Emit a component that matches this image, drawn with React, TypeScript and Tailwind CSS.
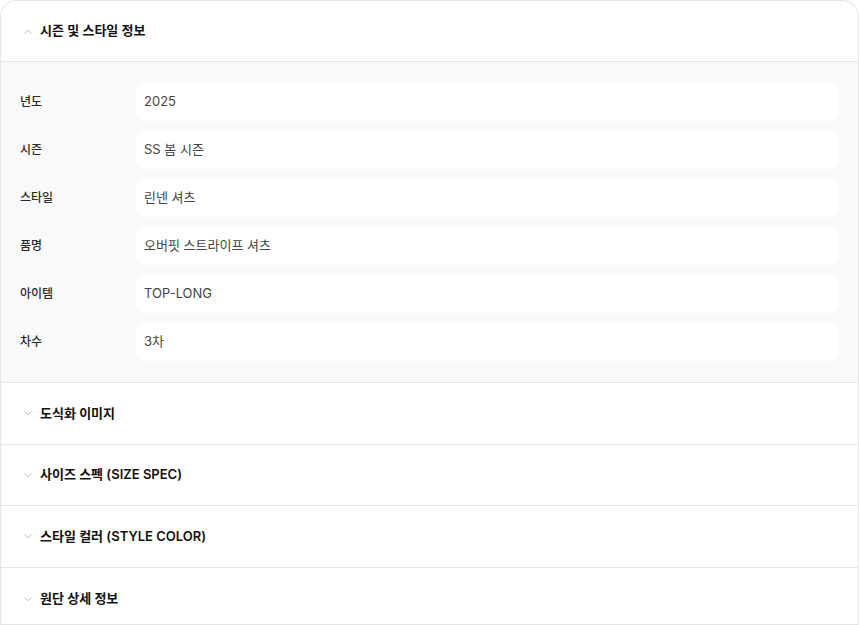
import React from "react";

const font = { fontFamily: 'Inter, "Noto Sans CJK KR", sans-serif' };

function Chevron({ up }: { up?: boolean }) {
  return (
    <svg width="8" height="5" viewBox="0 0 8 5" className="shrink-0">
      <path
        d={up ? "M1 4.2 L4 1.2 L7 4.2" : "M1 0.8 L4 3.8 L7 0.8"}
        fill="none"
        stroke="#b8b8b8"
        strokeWidth="1"
        strokeLinecap="round"
        strokeLinejoin="round"
      />
    </svg>
  );
}

const rows: [string, string][] = [
  ["년도", "2025"],
  ["시즌", "SS 봄 시즌"],
  ["스타일", "린넨 셔츠"],
  ["품명", "오버핏 스트라이프 셔츠"],
  ["아이템", "TOP-LONG"],
  ["차수", "3차"],
];

const sections: [string, string][] = [
  ["도식화 이미지", "h-[62px]"],
  ["사이즈 스펙 (SIZE SPEC)", "h-[61px]"],
  ["스타일 컬러 (STYLE COLOR)", "h-[62px]"],
  ["원단 상세 정보", "h-[57px] pt-[6px]"],
];

export default function App() {
  return (
    <div className="w-[859px] h-[625px] bg-white overflow-hidden" style={font}>
      <div className="border border-[#e6e6e6] rounded-t-[16px] bg-white">
        <div className="h-[61px] flex items-center pl-[23px] gap-[8px] border-b border-[#e6e6e6]">
          <Chevron up />
          <span className="text-[13px] font-semibold text-[#111111]">시즌 및 스타일 정보</span>
        </div>
        <div className="bg-[#f9f9f9] pl-[19px] pr-5 pt-[21px] pb-[21px] flex flex-col gap-[10px] border-b border-[#e6e6e6]">
          {rows.map(([label, value]) => (
            <div key={label} className="flex items-center">
              <div className="w-[116px] text-[12px] font-medium text-[#2a2a2a]">{label}</div>
              <div className="flex-1 h-[38px] bg-white rounded-[8px] flex items-center px-[8px] text-[13px] text-[#444444]">
                {value}
              </div>
            </div>
          ))}
        </div>
        {sections.map(([s, h]) => (
          <div key={s} className={`${h} flex items-center pl-[23px] gap-[8px] border-b border-[#e6e6e6]`}>
            <Chevron />
            <span className="text-[13px] font-semibold text-[#111111]">{s}</span>
          </div>
        ))}
      </div>
    </div>
  );
}
